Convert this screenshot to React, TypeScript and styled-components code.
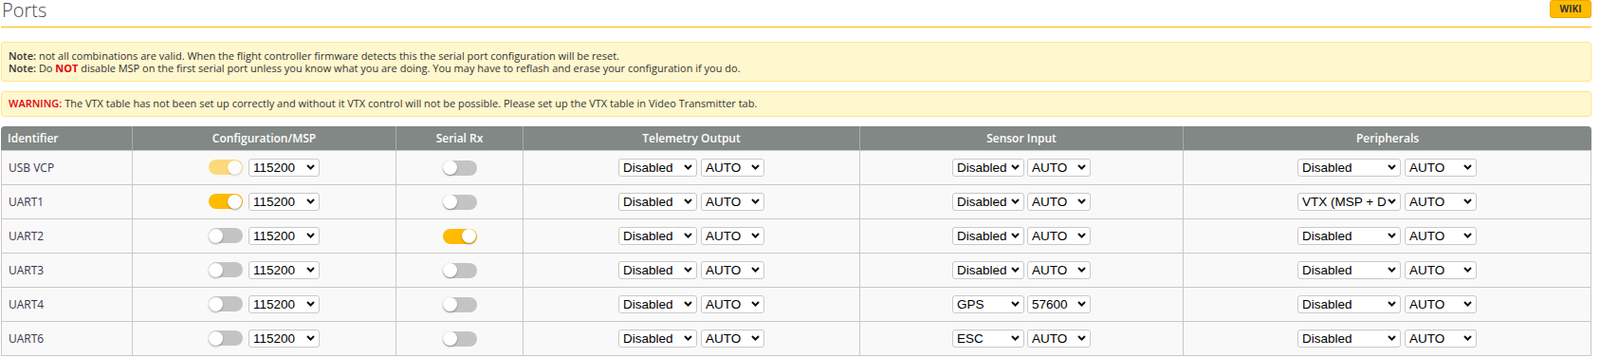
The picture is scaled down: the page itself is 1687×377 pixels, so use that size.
import React from 'react'
import styled, { createGlobalStyle } from 'styled-components'

const GlobalStyle = createGlobalStyle`
  body {
    margin: 0;
    background: #fff;
    font-family: 'Open Sans', sans-serif;
    color: #333;
  }
`

const Page = styled.div`
  padding: 0 9px 0 1px;
`

const TitleBar = styled.div`
  display: flex;
  justify-content: space-between;
  align-items: flex-start;
  height: 28px;
  border-bottom: 1px solid #ffbb00;
`

const Title = styled.div`
  font-size: 20px;
  font-weight: 300;
  color: #4a4a4a;
  line-height: 21px;
  padding-left: 1px;
`

const WikiButton = styled.a`
  display: block;
  height: 19px;
  width: 44px;
  box-sizing: border-box;
  background: #ffbb00;
  border: 1px solid #e8a900;
  border-radius: 3px;
  font-size: 10px;
  font-weight: 700;
  color: #333;
  text-align: center;
  line-height: 17px;
`

const Notice = styled.div<{ $mt: number; $pad: string }>`
  margin-top: ${(p) => p.$mt}px;
  background: #fff7ce;
  border: 1px solid #ffe58a;
  border-radius: 3px;
  padding: ${(p) => p.$pad};
  font-size: 11px;
  line-height: 12.5px;
  color: #333;
`

const Strong = styled.b`
  font-weight: 600;
`

const Red = styled.span`
  color: #e2000f;
  font-weight: 600;
`

const RedBold = styled.span`
  color: #e2000f;
  font-weight: 700;
`

const Table = styled.table`
  margin-top: 10px;
  width: 100%;
  border-collapse: separate;
  border-spacing: 0;
  table-layout: fixed;
  font-size: 12px;
`

const HeadCell = styled.th<{ $left?: boolean }>`
  background: #828885;
  color: #fff;
  font-weight: 600;
  font-size: 12px;
  height: 25px;
  padding: 0 7px;
  text-align: ${(p) => (p.$left ? 'left' : 'center')};
  border-right: 1px solid #a8adab;
  border-bottom: 1px solid #c8c8c8;

  &:first-child {
    border-top-left-radius: 4px;
  }
  &:last-child {
    border-top-right-radius: 4px;
    border-right: none;
  }
`

const Cell = styled.td<{ $left?: boolean }>`
  background: #f9f9f9;
  height: 35px;
  padding: 0 7px;
  border-right: 1px solid #c8c8c8;
  border-bottom: 1px solid #c8c8c8;
  text-align: ${(p) => (p.$left ? 'left' : 'center')};
  color: #43334a;

  &:first-child {
    border-left: 1px solid #c8c8c8;
  }
`

const Controls = styled.div<{ $gap: number }>`
  display: inline-flex;
  align-items: center;
  gap: ${(p) => p.$gap}px;
  vertical-align: middle;
`

const Toggle = styled.span<{ $on?: boolean; $dim?: boolean }>`
  position: relative;
  display: inline-block;
  width: 36px;
  height: 16px;
  border-radius: 8px;
  background: ${(p) => (p.$on ? '#ffbb00' : '#c4c4c4')};
  opacity: ${(p) => (p.$dim ? 0.5 : 1)};
  vertical-align: middle;

  &::after {
    content: '';
    position: absolute;
    top: 0.5px;
    ${(p) => (p.$on ? 'right: 1px;' : 'left: 0;')}
    width: 15px;
    height: 15px;
    border-radius: 50%;
    background: #fff;
    box-shadow: 0 1px 2px rgba(0, 0, 0, 0.35);
  }
`

const Select = styled.select<{ $w: number }>`
  appearance: none;
  -webkit-appearance: none;
  width: ${(p) => p.$w}px;
  height: 19px;
  box-sizing: border-box;
  border: 1px solid #c9c9c9;
  border-radius: 3px;
  background: #fff
    url("data:image/svg+xml,%3Csvg xmlns='http://www.w3.org/2000/svg' width='9' height='6' viewBox='0 0 9 6'%3E%3Cpath d='M1 1l3.5 3.5L8 1' fill='none' stroke='%23111' stroke-width='2'/%3E%3C/svg%3E")
    no-repeat right 4px center;
  font-family: 'Liberation Sans', Arial, sans-serif;
  font-size: 13.5px;
  color: #000;
  padding: 0 14px 0 4px;
  line-height: 17px;
  vertical-align: middle;
`

type Pair = [string, string]

interface Row {
  id: string
  msp: 'on' | 'dim' | 'off'
  rx: boolean
  tel: Pair
  sensor: Pair
  periph: Pair
}

const rows: Row[] = [
  { id: 'USB VCP', msp: 'dim', rx: false, tel: ['Disabled', 'AUTO'], sensor: ['Disabled', 'AUTO'], periph: ['Disabled', 'AUTO'] },
  { id: 'UART1', msp: 'on', rx: false, tel: ['Disabled', 'AUTO'], sensor: ['Disabled', 'AUTO'], periph: ['VTX (MSP + DisplayPort)', 'AUTO'] },
  { id: 'UART2', msp: 'off', rx: true, tel: ['Disabled', 'AUTO'], sensor: ['Disabled', 'AUTO'], periph: ['Disabled', 'AUTO'] },
  { id: 'UART3', msp: 'off', rx: false, tel: ['Disabled', 'AUTO'], sensor: ['Disabled', 'AUTO'], periph: ['Disabled', 'AUTO'] },
  { id: 'UART4', msp: 'off', rx: false, tel: ['Disabled', 'AUTO'], sensor: ['GPS', '57600'], periph: ['Disabled', 'AUTO'] },
  { id: 'UART6', msp: 'off', rx: false, tel: ['Disabled', 'AUTO'], sensor: ['ESC', 'AUTO'], periph: ['Disabled', 'AUTO'] },
]

function Pick({ value, w }: { value: string; w: number }) {
  return (
    <Select $w={w} defaultValue={value}>
      <option>{value}</option>
    </Select>
  )
}

export default function App() {
  return (
    <Page>
      <GlobalStyle />
      <TitleBar>
        <Title>Ports</Title>
        <WikiButton>WIKI</WikiButton>
      </TitleBar>

      <Notice $mt={15} $pad="8px 7px 7px">
        <Strong>Note:</Strong> not all combinations are valid. When the flight controller firmware detects this the serial port configuration will be reset.
        <br />
        <Strong>Note:</Strong> Do <RedBold>NOT</RedBold> disable MSP on the first serial port unless you know what you are doing. You may have to reflash and erase your configuration if you do.
      </Notice>

      <Notice $mt={10} $pad="6px 7px">
        <Red>WARNING:</Red> The VTX table has not been set up correctly and without it VTX control will not be possible. Please set up the VTX table in Video Transmitter tab.
      </Notice>

      <Table>
        <colgroup>
          <col style={{ width: 139 }} />
          <col style={{ width: 278 }} />
          <col style={{ width: 134 }} />
          <col style={{ width: 355 }} />
          <col style={{ width: 341 }} />
          <col />
        </colgroup>
        <thead>
          <tr>
            <HeadCell $left>Identifier</HeadCell>
            <HeadCell>Configuration/MSP</HeadCell>
            <HeadCell>Serial Rx</HeadCell>
            <HeadCell>Telemetry Output</HeadCell>
            <HeadCell>Sensor Input</HeadCell>
            <HeadCell>Peripherals</HeadCell>
          </tr>
        </thead>
        <tbody>
          {rows.map((r) => (
            <tr key={r.id}>
              <Cell $left>{r.id}</Cell>
              <Cell>
                <Controls $gap={6}>
                  <Toggle $on={r.msp !== 'off'} $dim={r.msp === 'dim'} />
                  <Pick value="115200" w={75} />
                </Controls>
              </Cell>
              <Cell>
                <Toggle $on={r.rx} />
              </Cell>
              <Cell>
                <Controls $gap={4}>
                  <Pick value={r.tel[0]} w={83} />
                  <Pick value={r.tel[1]} w={67} />
                </Controls>
              </Cell>
              <Cell>
                <Controls $gap={3}>
                  <Pick value={r.sensor[0]} w={76} />
                  <Pick value={r.sensor[1]} w={67} />
                </Controls>
              </Cell>
              <Cell>
                <Controls $gap={4}>
                  <Pick value={r.periph[0]} w={109} />
                  <Pick value={r.periph[1]} w={76} />
                </Controls>
              </Cell>
            </tr>
          ))}
        </tbody>
      </Table>
    </Page>
  )
}
